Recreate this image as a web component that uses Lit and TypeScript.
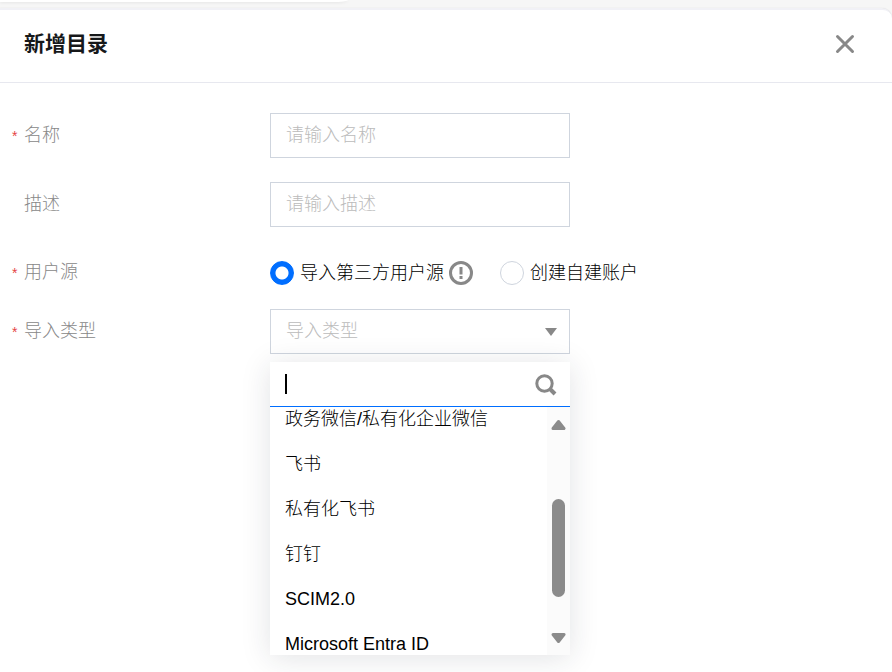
import { LitElement, html, css } from "lit";
import { customElement, state } from "lit/decorators.js";

@customElement("app-root")
export class AppRoot extends LitElement {
  static styles = css`
    :host {
      display: block;
      min-height: 100vh;
      background: #f6f6f6;
      color: #000;
      font: 300 18px/27px "Liberation Sans", "Noto Sans CJK SC", sans-serif;
      overflow: hidden;
    }
    *, *::before, *::after { box-sizing: border-box; }
    button, input, select { font: inherit; color: inherit; margin: 0; }
    .behind {
      height: 2px;
      width: 39%;
      background: #fff;
      border-bottom-right-radius: 16px 2px;
      box-shadow: 0 1px 3px rgba(0, 0, 0, 0.08);
    }
    .drawer {
      margin-top: 6px;
      min-height: calc(100vh - 8px);
      background: #fff;
      border-top: 2px solid #f1f1f6;
      border-top-right-radius: 10px;
      box-shadow: 0 0 1px rgba(30, 30, 50, 0.16);
    }
    .head {
      display: flex;
      align-items: center;
      justify-content: space-between;
      height: 73px;
      padding: 0 34px 4px 24px;
      border-bottom: 1px solid #e7e8ef;
    }
    h1 {
      margin: 0;
      font-size: 21px;
      line-height: 30px;
      font-weight: 700;
      color: #16181a;
    }
    .close {
      display: flex;
      padding: 0;
      border: 0;
      background: none;
    }
    svg { display: block; flex: none; }
    form { padding: 30px 12px; }
    .row {
      display: grid;
      grid-template-columns: 258px minmax(0, 1fr);
      align-items: center;
      min-height: 45px;
      margin-bottom: 24px;
    }
    .row.tight { min-height: 44px; margin-bottom: 14px; }
    .label {
      display: flex;
      color: #888;
    }
    .star {
      width: 12px;
      padding-top: 1px;
      color: #e54545;
      font-size: 14px;
    }
    .field {
      display: block;
      width: 300px;
      height: 45px;
      padding: 0 15px;
      border: 1px solid #cfd5de;
      border-radius: 0;
      background: transparent;
      outline: none;
      appearance: none;
      color: #bbb;
    }
    .field::placeholder { color: #bbb; opacity: 1; }
    .radios { display: flex; align-items: center; }
    .radio {
      display: flex;
      align-items: center;
      gap: 6px;
    }
    .radio input {
      appearance: none;
      width: 24px;
      height: 24px;
      border: 1px solid #cfd5de;
      border-radius: 50%;
      background: #fff;
    }
    .radio input:checked {
      border-color: #006eff;
      background: radial-gradient(circle, #fff 6px, #006eff 7px);
    }
    .help { margin: 0 27px 0 5px; }
    .picker { position: relative; width: 300px; }
    .arrow {
      position: absolute;
      right: 13px;
      top: 19px;
      pointer-events: none;
    }
    .menu {
      position: absolute;
      top: 53px;
      left: 0;
      width: 100%;
      background: #fff;
      box-shadow: 0 3px 28px rgba(30, 35, 55, 0.13);
    }
    .search {
      position: relative;
      display: flex;
      align-items: center;
      height: 45px;
      padding-right: 13px;
      border-bottom: 1px solid #006eff;
    }
    .search svg { margin-top: 2px; }
    .search input {
      flex: 1;
      min-width: 0;
      height: 44px;
      padding: 0 15px;
      border: 0;
      outline: none;
      background: none;
      caret-color: transparent;
    }
    .caret {
      position: absolute;
      left: 15px;
      top: 12px;
      width: 2px;
      height: 20px;
      background: #000;
    }
    .body {
      display: flex;
      height: 248px;
    }
    .list {
      flex: 1;
      display: flex;
      flex-direction: column;
      justify-content: center;
      overflow: hidden;
    }
    .option {
      flex: none;
      height: 45px;
      padding: 2px 15px 0;
      border: 0;
      background: none;
      text-align: left;
    }
    .bar {
      display: flex;
      flex-direction: column;
      align-items: center;
      width: 23px;
      padding: 12px 0 11px;
      background: #fbfbfb;
    }
    .thumb {
      width: 13px;
      height: 98px;
      margin: 68px 0 auto;
      border-radius: 7px;
      background: #8b8b8b;
    }
  `;

  @state() private source = "import";

  private options = [
    "政务微信/私有化企业微信",
    "飞书",
    "私有化飞书",
    "钉钉",
    "SCIM2.0",
    "Microsoft Entra ID",
  ];

  private label(id: string, text: string, required = true) {
    return html`<label class="label" for=${id}><span class="star">${required ? "*" : ""}</span>${text}</label>`;
  }

  render() {
    return html`
      <div class="behind"></div>
      <main class="drawer">
        <header class="head">
          <h1>新增目录</h1>
          <button class="close" aria-label="关闭">
            <svg width="26" height="26" viewBox="0 0 26 26" fill="none" stroke="#888" stroke-width="3" stroke-linecap="round">
              <path d="M5.5 5.5 20.5 20.5M20.5 5.5 5.5 20.5" />
            </svg>
          </button>
        </header>
        <form @submit=${(e: Event) => e.preventDefault()}>
          <div class="row">
            ${this.label("name", "名称")}
            <input class="field" id="name" placeholder="请输入名称" />
          </div>
          <div class="row">
            ${this.label("desc", "描述", false)}
            <input class="field" id="desc" placeholder="请输入描述" />
          </div>
          <div class="row tight">
            ${this.label("import", "用户源")}
            <div class="radios">
              <label class="radio">
                <input type="radio" name="source" id="import" .checked=${this.source === "import"}
                  @change=${() => (this.source = "import")} />导入第三方用户源
              </label>
              <svg class="help" width="24" height="24" viewBox="0 0 24 24" fill="none" stroke="#888" stroke-width="3">
                <circle cx="12" cy="12" r="10.5" />
                <path d="M12 6v7.5M12 15v3" />
              </svg>
              <label class="radio">
                <input type="radio" name="source" .checked=${this.source === "own"}
                  @change=${() => (this.source = "own")} />创建自建账户
              </label>
            </div>
          </div>
          <div class="row">
            ${this.label("type", "导入类型")}
            <div class="picker">
              <select class="field" id="type"><option>导入类型</option></select>
              <svg class="arrow" width="12" height="8" viewBox="0 0 12 8" fill="#888"><path d="M0 0h12L6 8z" /></svg>
              <div class="menu">
                <div class="search">
                  <input aria-label="搜索" />
                  <span class="caret"></span>
                  <svg width="22" height="22" viewBox="0 0 22 22" fill="none" stroke="#888" stroke-width="3">
                    <circle cx="9.5" cy="9.5" r="7.7" />
                    <path d="M14.5 14.5 20 20" stroke-width="4" />
                  </svg>
                </div>
                <div class="body">
                  <div class="list" role="listbox">
                    ${this.options.map((o) => html`<button type="button" class="option" role="option">${o}</button>`)}
                  </div>
                  <div class="bar">
                    <svg width="15" height="12" viewBox="0 0 15 12" fill="#8b8b8b" stroke="#8b8b8b" stroke-width="3" stroke-linejoin="round"><path d="M7.5 2.5 13 9.5H2z" /></svg>
                    <div class="thumb"></div>
                    <svg width="15" height="12" viewBox="0 0 15 12" fill="#8b8b8b" stroke="#8b8b8b" stroke-width="3" stroke-linejoin="round"><path d="M7.5 9.5 13 2.5H2z" /></svg>
                  </div>
                </div>
              </div>
            </div>
          </div>
        </form>
      </main>
    `;
  }
}
